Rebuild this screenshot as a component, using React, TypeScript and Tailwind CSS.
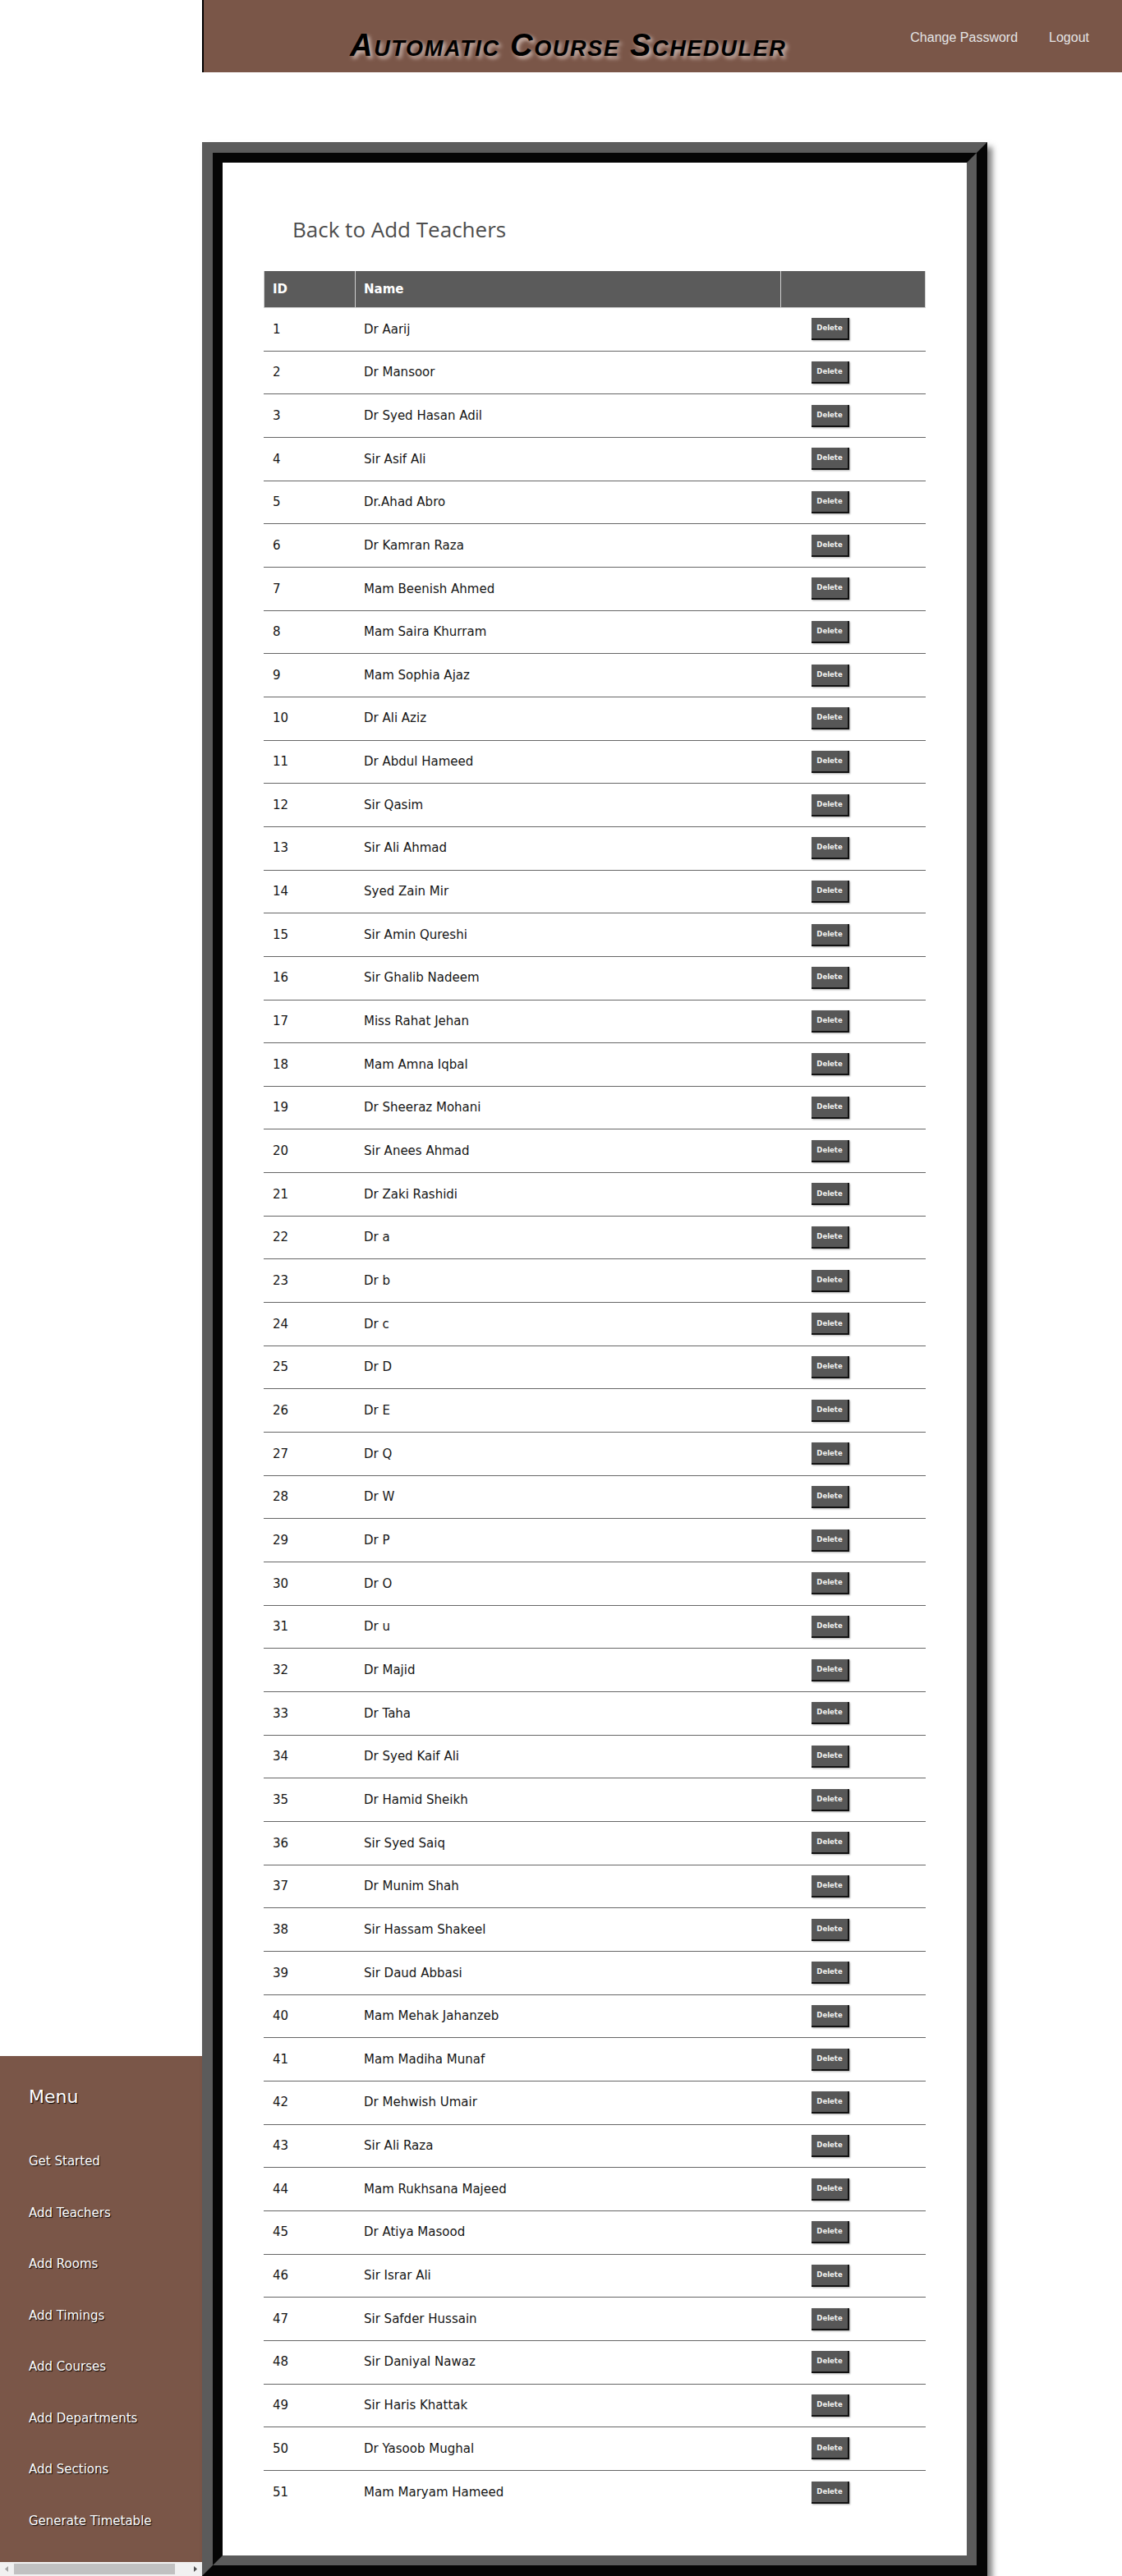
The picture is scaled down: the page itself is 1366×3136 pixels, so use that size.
import React from "react";

const teachers: string[] = [
  "Dr Aarij",
  "Dr Mansoor",
  "Dr Syed Hasan Adil",
  "Sir Asif Ali",
  "Dr.Ahad Abro",
  "Dr Kamran Raza",
  "Mam Beenish Ahmed",
  "Mam Saira Khurram",
  "Mam Sophia Ajaz",
  "Dr Ali Aziz",
  "Dr Abdul Hameed",
  "Sir Qasim",
  "Sir Ali Ahmad",
  "Syed Zain Mir",
  "Sir Amin Qureshi",
  "Sir Ghalib Nadeem",
  "Miss Rahat Jehan",
  "Mam Amna Iqbal",
  "Dr Sheeraz Mohani",
  "Sir Anees Ahmad",
  "Dr Zaki Rashidi",
  "Dr a",
  "Dr b",
  "Dr c",
  "Dr D",
  "Dr E",
  "Dr Q",
  "Dr W",
  "Dr P",
  "Dr O",
  "Dr u",
  "Dr Majid",
  "Dr Taha",
  "Dr Syed Kaif Ali",
  "Dr Hamid Sheikh",
  "Sir Syed Saiq",
  "Dr Munim Shah",
  "Sir Hassam Shakeel",
  "Sir Daud Abbasi",
  "Mam Mehak Jahanzeb",
  "Mam Madiha Munaf",
  "Dr Mehwish Umair",
  "Sir Ali Raza",
  "Mam Rukhsana Majeed",
  "Dr Atiya Masood",
  "Sir Israr Ali",
  "Sir Safder Hussain",
  "Sir Daniyal Nawaz",
  "Sir Haris Khattak",
  "Dr Yasoob Mughal",
  "Mam Maryam Hameed",
];

const menu = [
  "Get Started",
  "Add Teachers",
  "Add Rooms",
  "Add Timings",
  "Add Courses",
  "Add Departments",
  "Add Sections",
  "Generate Timetable",
];

function Sidebar() {
  return (
    <div className="h-[633px] bg-[#7a5648] flex flex-col font-['DejaVu_Sans',sans-serif] text-white [text-shadow:1px_1px_1px_#000]">
      <div className="pl-[35px] pt-[37px] text-[22px] leading-[26px]">Menu</div>
      <ul className="mt-[34px]">
        {menu.map((m) => (
          <li key={m} className="h-[62.5px] flex items-center pl-[35px] text-[15px]">
            {m}
          </li>
        ))}
      </ul>
      {/* horizontal scrollbar of the menu panel */}
      <div className="mt-auto h-[17px] bg-[#f1f1f1] flex items-center">
        <svg width="17" height="17" viewBox="0 0 17 17" className="shrink-0">
          <path d="M10 5 L6 8.5 L10 12 Z" fill="#a3a3a3" />
        </svg>
        <div className="h-[13px] w-[196px] bg-[#c1c1c1]" />
        <div className="flex-1" />
        <svg width="17" height="17" viewBox="0 0 17 17" className="shrink-0">
          <path d="M7 5 L11 8.5 L7 12 Z" fill="#505050" />
        </svg>
      </div>
    </div>
  );
}

function Header() {
  return (
    <div className="h-[88px] bg-[#7a5648] border-l-2 border-black flex items-start">
      <h1 className="ml-[178px] mt-[27px] font-['Liberation_Sans',Arial,sans-serif] text-[38px] leading-normal font-bold italic [font-variant:small-caps] tracking-[1.7px] text-black [text-shadow:3px_3px_5px_#d6c2ba]">
        Automatic Course Scheduler
      </h1>
      <div className="ml-auto mr-[40px] mt-[34px] flex gap-[38px] font-['Liberation_Sans',Arial,sans-serif] text-[16px] text-[#e4e4e4]">
        <a href="#">Change Password</a>
        <a href="#">Logout</a>
      </div>
    </div>
  );
}

function DeleteButton() {
  return (
    <button className="w-[46px] h-[27px] bg-[#575757] border-r-2 border-b-2 border-[#111] shadow-[1px_1px_2px_rgba(0,0,0,0.35)] text-[#f2f2f2] text-[8.5px] font-bold flex items-center justify-center">
      Delete
    </button>
  );
}

function TeacherTable() {
  return (
    <div className="w-[806px] font-['DejaVu_Sans',Verdana,sans-serif]">
      <div className="grid grid-cols-[111px_518px_177px] h-[45px] bg-[#5b5b5b] text-white text-[15px] font-bold">
        <div className="border-l border-b border-[#cfcfcf] pl-[10px] flex items-center">ID</div>
        <div className="border-l border-b border-[#cfcfcf] pl-[10px] flex items-center">Name</div>
        <div className="border-l border-r border-b border-[#cfcfcf]" />
      </div>
      {teachers.map((name, i) => (
        <div
          key={i}
          className={`grid grid-cols-[111px_518px_177px] h-[52.67px] items-center text-[15px] text-[#151515] ${
            i < teachers.length - 1 ? "border-b border-[#666]" : ""
          }`}
        >
          <div className="pl-[11px]">{i + 1}</div>
          <div className="pl-[11px]">{name}</div>
          <div className="pl-[38px]">
            <DeleteButton />
          </div>
        </div>
      ))}
    </div>
  );
}

export default function App() {
  return (
    <div className="flex h-[3136px] bg-white overflow-hidden">
      <div className="w-[246px] shrink-0 flex flex-col justify-end">
        <Sidebar />
      </div>
      <div className="flex-1 flex flex-col">
        <Header />
        <div className="mt-[85px] w-[956px] flex-1 border-[13px] border-t-[#5b5b5b] border-l-[#5b5b5b] border-b-[#050505] border-r-[#050505] shadow-[6px_6px_7px_rgba(0,0,0,0.5)] flex">
          <div className="flex-1 border-[12px] border-t-[#050505] border-l-[#050505] border-b-[#5b5b5b] border-r-[#5b5b5b] bg-white">
            <a
              href="#"
              className="block ml-[85px] mt-[63px] font-['Open_Sans',sans-serif] text-[26px] leading-[36px] text-[#4d4d4d]"
            >
              Back to Add Teachers
            </a>
            <div className="ml-[50px] mt-[33px]">
              <TeacherTable />
            </div>
          </div>
        </div>
      </div>
    </div>
  );
}
